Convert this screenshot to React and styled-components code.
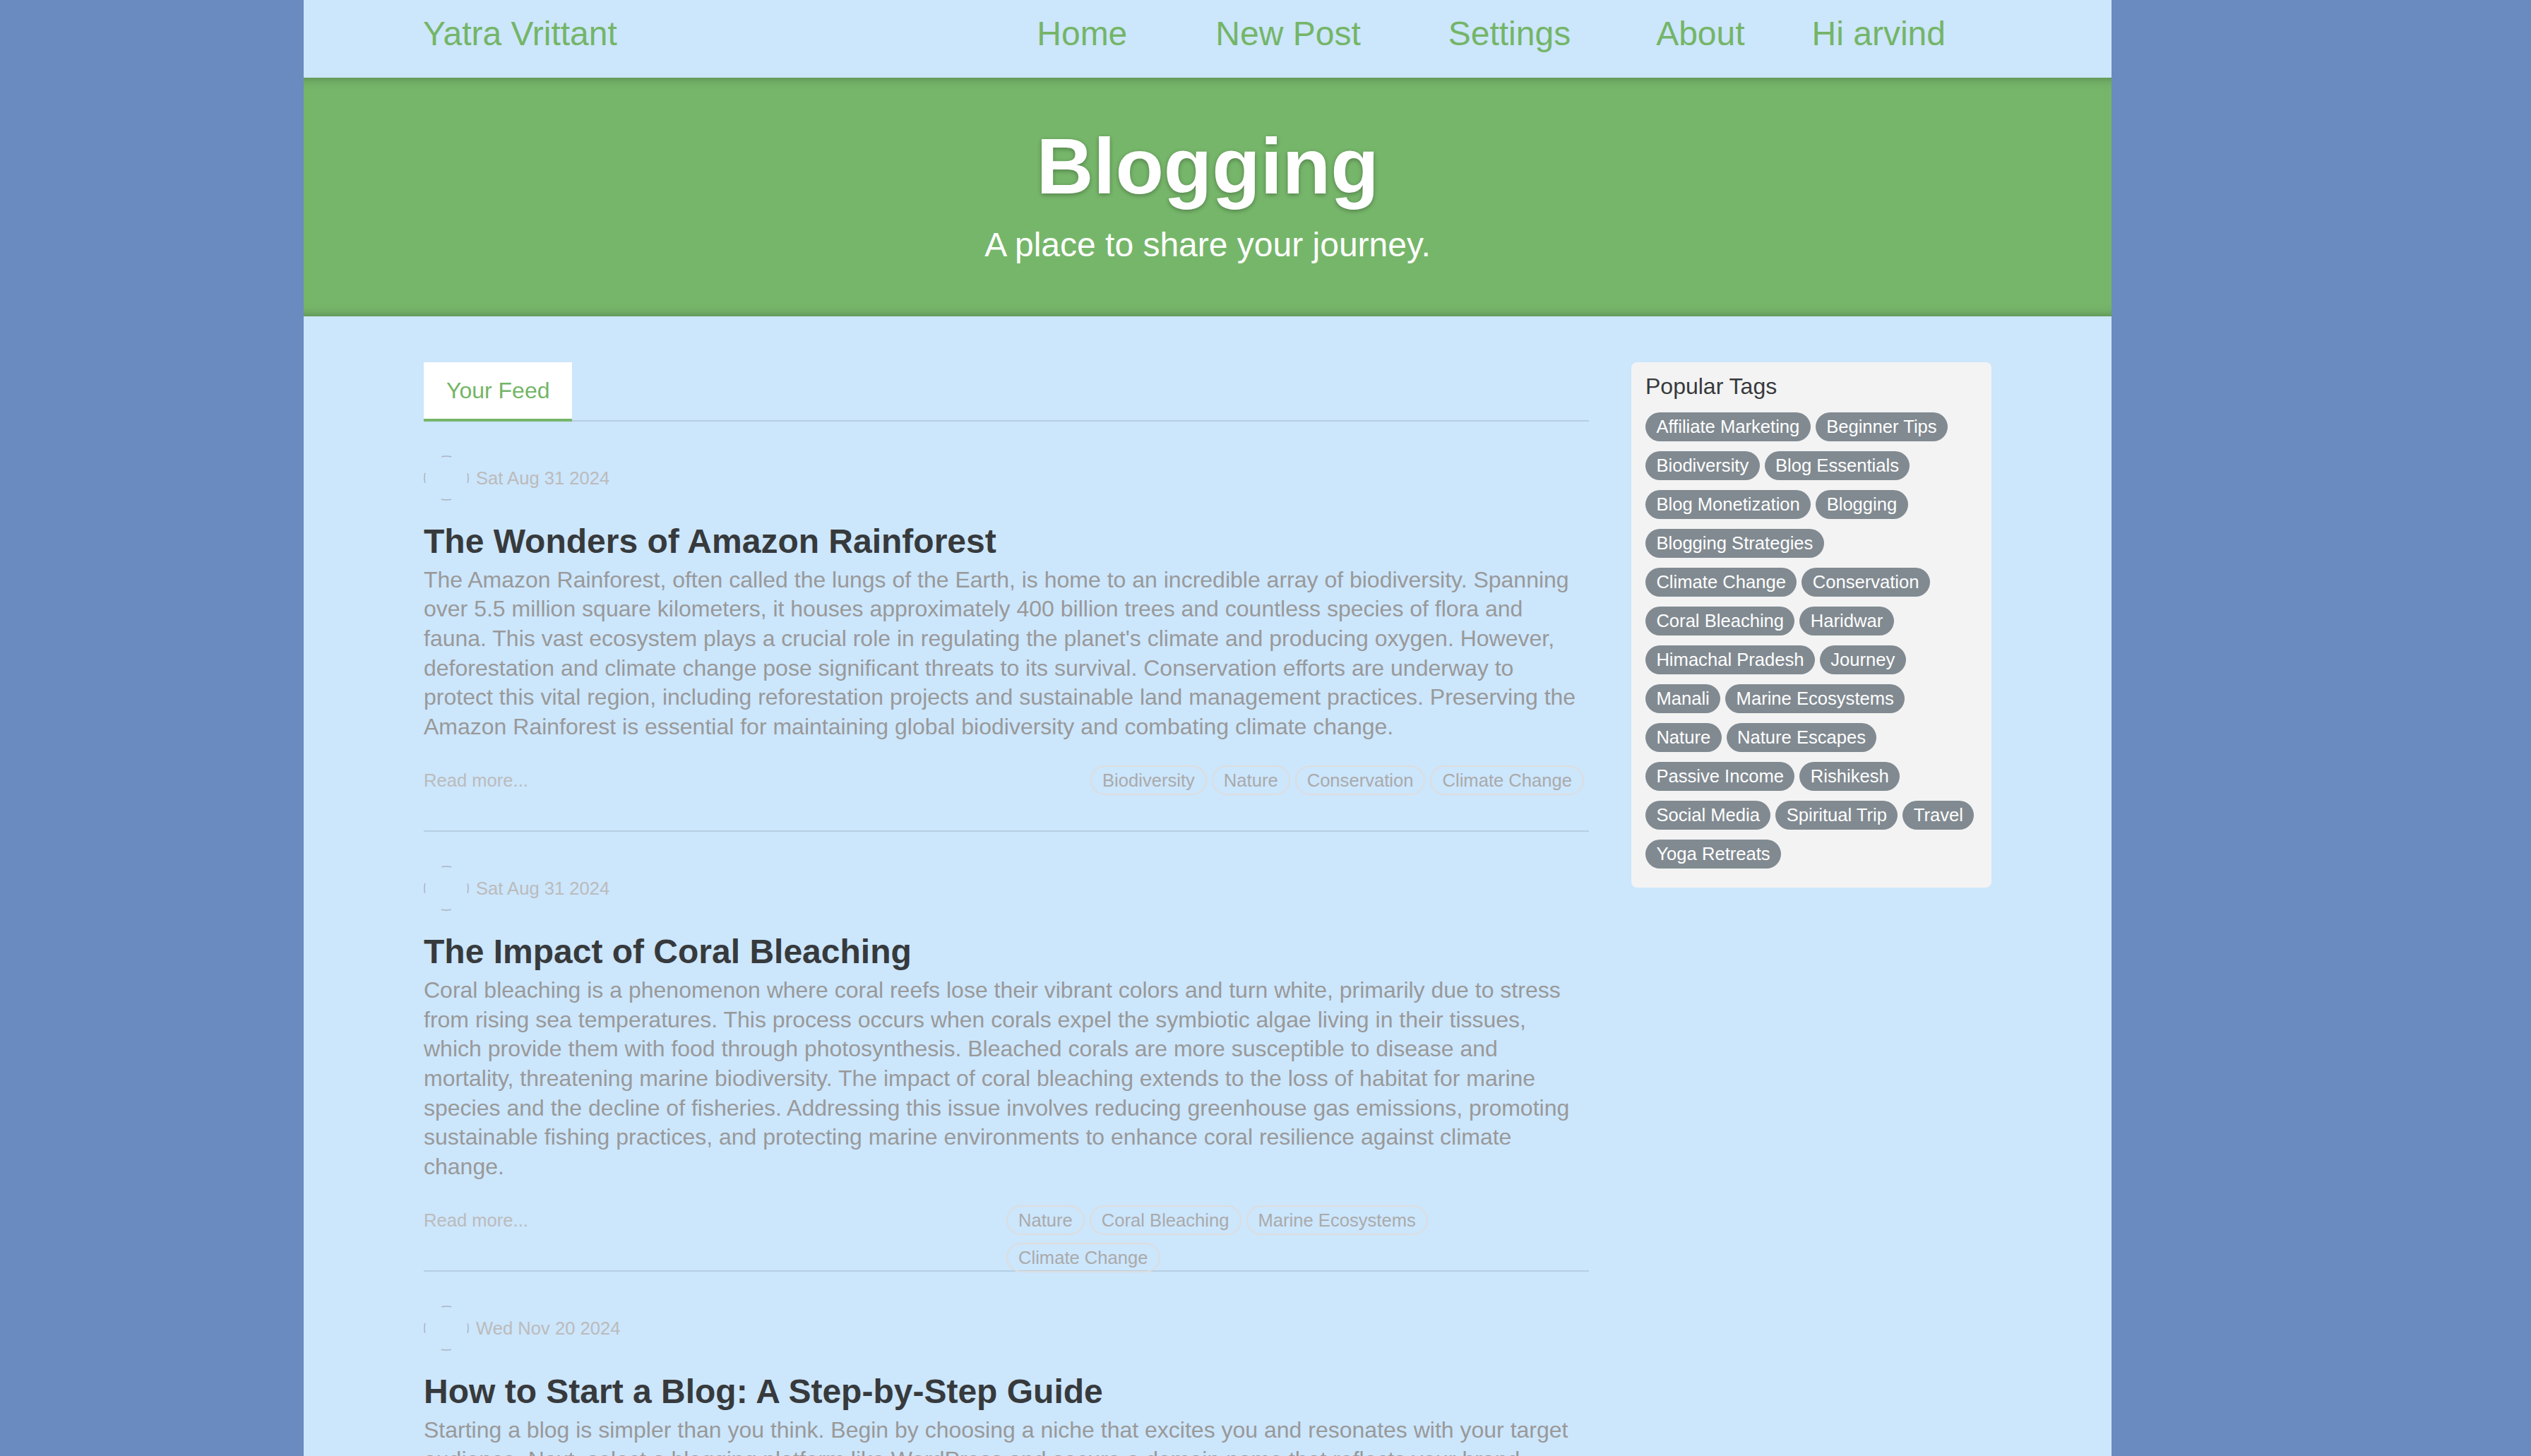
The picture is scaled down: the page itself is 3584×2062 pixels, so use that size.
import React from "react";
import styled, { createGlobalStyle } from "styled-components";

const GlobalStyle = createGlobalStyle`
  body {
    margin: 0;
    background: #6a8bc0;
    font-family: "Liberation Sans", Arial, Helvetica, sans-serif;
  }
`;

const Page = styled.div`
  width: 2560px;
  margin-left: 430px;
  min-height: 100vh;
  background: #cce6fc;
`;

const Navbar = styled.nav`
  height: 110px;
  box-sizing: border-box;
  display: flex;
  align-items: flex-start;
  padding: 12px 235px 0 169px;
`;

const Brand = styled.a`
  font-size: 48px;
  line-height: 72px;
  color: #74b567;
  text-decoration: none;
`;

const NavList = styled.ul`
  display: flex;
  margin: 0 0 0 auto;
  padding: 0;
  list-style: none;
`;

const NavItem = styled.li`
  margin-left: ${(p) => p.$gap}px;
  font-size: 48px;
  line-height: 72px;
  color: #74b567;
`;

const Banner = styled.header`
  height: 338px;
  box-sizing: border-box;
  padding: 64px 0;
  background: #76b66a;
  text-align: center;
  color: #fff;
  box-shadow: inset 0 16px 16px -16px rgba(0, 0, 0, 0.3),
    inset 0 -16px 16px -16px rgba(0, 0, 0, 0.3);
`;

const BannerTitle = styled.h1`
  margin: 0 0 14px;
  font-size: 112px;
  line-height: 1.1;
  font-weight: 700;
  text-shadow: 0 2px 6px rgba(0, 0, 0, 0.3);
`;

const BannerText = styled.p`
  margin: 0;
  font-size: 48px;
  line-height: 72px;
  font-weight: 300;
`;

const Container = styled.div`
  width: 2280px;
  box-sizing: border-box;
  margin: 0 auto;
  padding: 65px 30px 0;
  display: flex;
  gap: 60px;
  align-items: flex-start;
`;

const Feed = styled.main`
  width: 1650px;
  flex: none;
`;

const FeedToggle = styled.div`
  display: flex;
  border-bottom: 2px solid rgba(0, 0, 0, 0.1);
`;

const Tab = styled.a`
  padding: 16px 32px;
  margin-bottom: -2px;
  background: #fff;
  color: #74b567;
  font-size: 32px;
  line-height: 48px;
  border-bottom: 4px solid #76b66a;
  text-decoration: none;
`;

const Article = styled.article`
  padding: 48px 0;
  border-top: 2px solid rgba(0, 0, 0, 0.1);
  &:first-of-type {
    border-top: none;
  }
`;

const Meta = styled.div`
  display: flex;
  align-items: center;
  margin-bottom: 32px;
`;

const Info = styled.div`
  margin: 0 48px 0 10px;
`;

const DateText = styled.span`
  display: block;
  font-size: 25.6px;
  line-height: 32px;
  color: #bbb;
  font-weight: 300;
`;

const Title = styled.h2`
  margin: 0 0 7px;
  font-size: 48px;
  line-height: 1.1;
  font-weight: 700;
  color: #373a3c;
`;

const Preview = styled.p`
  margin: 0 0 32px;
  font-size: 32px;
  line-height: 41.6px;
  font-weight: 300;
  color: #999;
`;

const Footer = styled.div`
  height: 46px;
  display: flex;
  justify-content: space-between;
  align-items: flex-start;
`;

const ReadMore = styled.span`
  font-size: 25.6px;
  line-height: 46px;
  font-weight: 300;
  color: #bbb;
`;

const TagList = styled.ul`
  display: flex;
  flex-wrap: wrap;
  row-gap: 11px;
  max-width: 50%;
  margin: 2px 0 0;
  padding: 0;
  list-style: none;
`;

const OutlineTag = styled.li`
  margin-right: 7px;
  padding: 3px 15px;
  border: 2px solid #ddd;
  border-radius: 999px;
  font-size: 25.6px;
  line-height: 32px;
  font-weight: 300;
  color: #aaa;
  white-space: nowrap;
`;

const Sidebar = styled.aside`
  width: 510px;
  flex: none;
  box-sizing: border-box;
  padding: 10px 20px 20px;
  background: #f3f3f3;
  border-radius: 8px;
`;

const SidebarTitle = styled.p`
  margin: 0 0 6px;
  font-size: 32px;
  line-height: 48px;
  color: #373a3c;
`;

const TagCloud = styled.div`
  display: flex;
  flex-direction: column;
  gap: 14px;
  padding: 7px 0 7px;
`;

const TagRow = styled.div`
  display: flex;
  gap: 7px;
`;

const Pill = styled.a`
  padding: 3px 15.4px;
  border-radius: 999px;
  background: #818a91;
  color: #fff;
  font-size: 25.6px;
  line-height: 35px;
  white-space: nowrap;
  text-decoration: none;
`;

function Avatar() {
  // broken image: only four faint ticks of the round border show
  return (
    <svg width="64" height="64" viewBox="0 0 64 64">
      <circle
        cx="32"
        cy="32"
        r="31"
        fill="none"
        stroke="#aab4bf"
        strokeWidth="1.5"
        strokeDasharray="14 34.7"
        strokeDashoffset="7"
      />
    </svg>
  );
}

const navItems = [
  { label: "Home", gap: 0 },
  { label: "New Post", gap: 125 },
  { label: "Settings", gap: 124 },
  { label: "About", gap: 121 },
  { label: "Hi arvind", gap: 95 },
];

const articles = [
  {
    date: "Sat Aug 31 2024",
    title: "The Wonders of Amazon Rainforest",
    body:
      "The Amazon Rainforest, often called the lungs of the Earth, is home to an incredible array of biodiversity. Spanning over 5.5 million square kilometers, it houses approximately 400 billion trees and countless species of flora and fauna. This vast ecosystem plays a crucial role in regulating the planet's climate and producing oxygen. However, deforestation and climate change pose significant threats to its survival. Conservation efforts are underway to protect this vital region, including reforestation projects and sustainable land management practices. Preserving the Amazon Rainforest is essential for maintaining global biodiversity and combating climate change.",
    tags: ["Biodiversity", "Nature", "Conservation", "Climate Change"],
  },
  {
    date: "Sat Aug 31 2024",
    title: "The Impact of Coral Bleaching",
    body:
      "Coral bleaching is a phenomenon where coral reefs lose their vibrant colors and turn white, primarily due to stress from rising sea temperatures. This process occurs when corals expel the symbiotic algae living in their tissues, which provide them with food through photosynthesis. Bleached corals are more susceptible to disease and mortality, threatening marine biodiversity. The impact of coral bleaching extends to the loss of habitat for marine species and the decline of fisheries. Addressing this issue involves reducing greenhouse gas emissions, promoting sustainable fishing practices, and protecting marine environments to enhance coral resilience against climate change.",
    tags: ["Nature", "Coral Bleaching", "Marine Ecosystems", "Climate Change"],
  },
  {
    date: "Wed Nov 20 2024",
    title: "How to Start a Blog: A Step-by-Step Guide",
    body:
      "Starting a blog is simpler than you think. Begin by choosing a niche that excites you and resonates with your target audience. Next, select a blogging platform like WordPress and secure a domain name that reflects your brand. Design a clean layout, publish valuable content consistently, and share your posts on social media to grow your readership over time.",
    tags: ["Blogging", "Beginner Tips", "Blog Essentials"],
  },
];

const popularTags = [
  ["Affiliate Marketing", "Beginner Tips"],
  ["Biodiversity", "Blog Essentials"],
  ["Blog Monetization", "Blogging"],
  ["Blogging Strategies"],
  ["Climate Change", "Conservation"],
  ["Coral Bleaching", "Haridwar"],
  ["Himachal Pradesh", "Journey"],
  ["Manali", "Marine Ecosystems"],
  ["Nature", "Nature Escapes"],
  ["Passive Income", "Rishikesh"],
  ["Social Media", "Spiritual Trip", "Travel"],
  ["Yoga Retreats"],
];

export default function App() {
  return (
    <>
      <GlobalStyle />
      <Page>
        <Navbar>
          <Brand href="#">Yatra Vrittant</Brand>
          <NavList>
            {navItems.map((item) => (
              <NavItem key={item.label} $gap={item.gap}>
                {item.label}
              </NavItem>
            ))}
          </NavList>
        </Navbar>

        <Banner>
          <BannerTitle>Blogging</BannerTitle>
          <BannerText>A place to share your journey.</BannerText>
        </Banner>

        <Container>
          <Feed>
            <FeedToggle>
              <Tab href="#">Your Feed</Tab>
            </FeedToggle>
            {articles.map((a) => (
              <Article key={a.title}>
                <Meta>
                  <Avatar />
                  <Info>
                    <DateText>{a.date}</DateText>
                  </Info>
                </Meta>
                <Title>{a.title}</Title>
                <Preview>{a.body}</Preview>
                <Footer>
                  <ReadMore>Read more...</ReadMore>
                  <TagList>
                    {a.tags.map((t) => (
                      <OutlineTag key={t}>{t}</OutlineTag>
                    ))}
                  </TagList>
                </Footer>
              </Article>
            ))}
          </Feed>

          <Sidebar>
            <SidebarTitle>Popular Tags</SidebarTitle>
            <TagCloud>
              {popularTags.map((row, i) => (
                <TagRow key={i}>
                  {row.map((t) => (
                    <Pill key={t} href="#">
                      {t}
                    </Pill>
                  ))}
                </TagRow>
              ))}
            </TagCloud>
          </Sidebar>
        </Container>
      </Page>
    </>
  );
}
